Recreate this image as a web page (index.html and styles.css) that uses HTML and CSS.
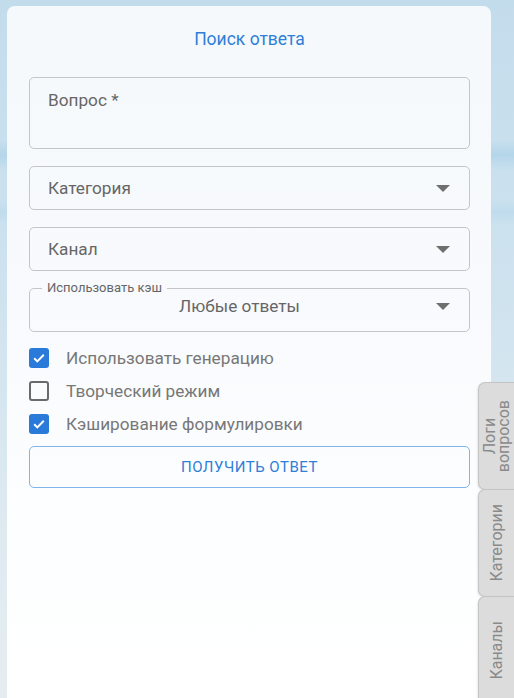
FILE: index.html
```html
<!DOCTYPE html>
<html lang="ru">
<head>
<meta charset="utf-8">
<title>Поиск ответа</title>
<link rel="stylesheet" href="styles.css">
</head>
<body>
<div class="page">
  <main class="card">
    <h1 class="title">Поиск ответа</h1>
    <div class="field textarea"><span class="placeholder">Вопрос *</span></div>
    <div class="field select"><span class="placeholder">Категория</span><span class="arrow"></span></div>
    <div class="field select"><span class="placeholder">Канал</span><span class="arrow"></span></div>
    <fieldset class="field select legend-field">
      <legend>Использовать кэш</legend>
      <span class="value">Любые ответы</span><span class="arrow"></span>
    </fieldset>
    <div class="checks">
      <label class="check"><span class="box on"><svg viewBox="0 0 18 18" width="18" height="18"><path d="M4.2 9.3l3.1 3.1 6.5-6.6" fill="none" stroke="#fff" stroke-width="2"/></svg></span>Использовать генерацию</label>
      <label class="check"><span class="box"></span>Творческий режим</label>
      <label class="check"><span class="box on"><svg viewBox="0 0 18 18" width="18" height="18"><path d="M4.2 9.3l3.1 3.1 6.5-6.6" fill="none" stroke="#fff" stroke-width="2"/></svg></span>Кэширование формулировки</label>
    </div>
    <button class="btn">Получить ответ</button>
  </main>
  <nav class="tabs">
    <div class="tab t1"><span>Логи<br>вопросов</span></div>
    <div class="tab t2"><span>Категории</span></div>
    <div class="tab t3"><span>Каналы</span></div>
  </nav>
</div>
</body>
</html>
```

FILE: styles.css
```css
html, body {
  margin: 0;
  padding: 0;
  height: 100%;
  overflow: hidden;
}
body {
  font-family: Roboto, "Noto Sans", sans-serif;
  background:
    linear-gradient(180deg, rgba(255,255,255,0) 0px, rgba(255,255,255,0) 140px, rgba(160,205,230,0.5) 155px, rgba(255,255,255,0) 170px, rgba(255,255,255,0) 200px, rgba(180,215,235,0.5) 212px, rgba(255,255,255,0) 225px),
    linear-gradient(180deg, #c3dcec 0px, #cfe3ef 300px, #dde9f0 500px, #e6edf1 698px);
}
.page {
  position: relative;
  height: 100%;
  box-sizing: border-box;
  padding: 6px 0 0 7px;
}
.card {
  width: 484px;
  height: 720px;
  box-sizing: border-box;
  padding: 23px 21px 0 22px;
  border-radius: 8px;
  background: linear-gradient(180deg, #f5f9fc 0px, #f8fafd 300px, #fdfeff 520px, #ffffff 700px);
  display: flex;
  flex-direction: column;
}
.title {
  margin: 0 0 28px;
  font-size: 17.5px;
  line-height: 20px;
  font-weight: 400;
  text-align: center;
  color: #2f7ed8;
}
.field {
  box-sizing: border-box;
  width: 441px;
  border: 1px solid #c3c5c8;
  border-radius: 5px;
  display: flex;
  align-items: center;
  padding: 0 19px 0 18px;
  font-size: 17.2px;
  color: #666;
  margin: 0 0 17px;
  position: relative;
}
.textarea {
  height: 72px;
  align-items: flex-start;
  padding-top: 12px;
  line-height: 20px;
}
.select {
  height: 44px;
}
.placeholder {
  flex: 1;
}
.arrow {
  width: 0;
  height: 0;
  border-left: 7px solid transparent;
  border-right: 7px solid transparent;
  border-top: 7px solid #6f6f6f;
  margin-left: 5px;
}
.legend-field {
  margin: -8px 0 0;
  height: 52px;
  padding-top: 0;
  padding-bottom: 7px;
  min-width: 0;
}
.legend-field legend {
  font-size: 13px;
  line-height: 16px;
  color: #666;
  padding: 0 5px;
  margin-left: -6px;
}
.value {
  flex: 1;
  text-align: center;
  color: #666;
}
.checks {
  display: flex;
  flex-direction: column;
  margin: 9px 0 0;
}
.check {
  display: flex;
  align-items: center;
  height: 33px;
  font-size: 17.2px;
  color: #777;
}
.box {
  box-sizing: border-box;
  width: 20px;
  height: 20px;
  border: 2px solid #6a6a6a;
  border-radius: 3px;
  margin-right: 17px;
  display: flex;
  align-items: center;
  justify-content: center;
}
.box.on {
  border: none;
  background: #2a7bd9;
}
.btn {
  margin-top: 6px;
  width: 441px;
  height: 42px;
  box-sizing: border-box;
  background: transparent;
  border: 1px solid #80b4ea;
  border-radius: 5px;
  color: #2f7ed8;
  font-family: Roboto, "Noto Sans", sans-serif;
  font-size: 15px;
  text-transform: uppercase;
  letter-spacing: 0.5px;
}
.tabs {
  position: absolute;
  left: 478px;
  top: 382px;
  width: 36px;
  display: flex;
  flex-direction: column;
}
.tab {
  box-sizing: border-box;
  height: 108px;
  margin-bottom: -1px;
  background: #dcdcdc;
  border: 1px solid #c4c4c4;
  border-right: none;
  border-radius: 7px 0 0 7px;
  display: flex;
  align-items: center;
  justify-content: center;
  font-size: 16px;
  line-height: 14px;
  color: #8a8a8a;
  box-shadow: -1px 1px 2px rgba(0,0,0,0.08);
}
.tab span {
  writing-mode: vertical-rl;
  transform: rotate(180deg);
  text-align: center;
}
.t1 { padding-left: 1px; }
.t3 { height: 120px; padding-bottom: 12px; }
```
